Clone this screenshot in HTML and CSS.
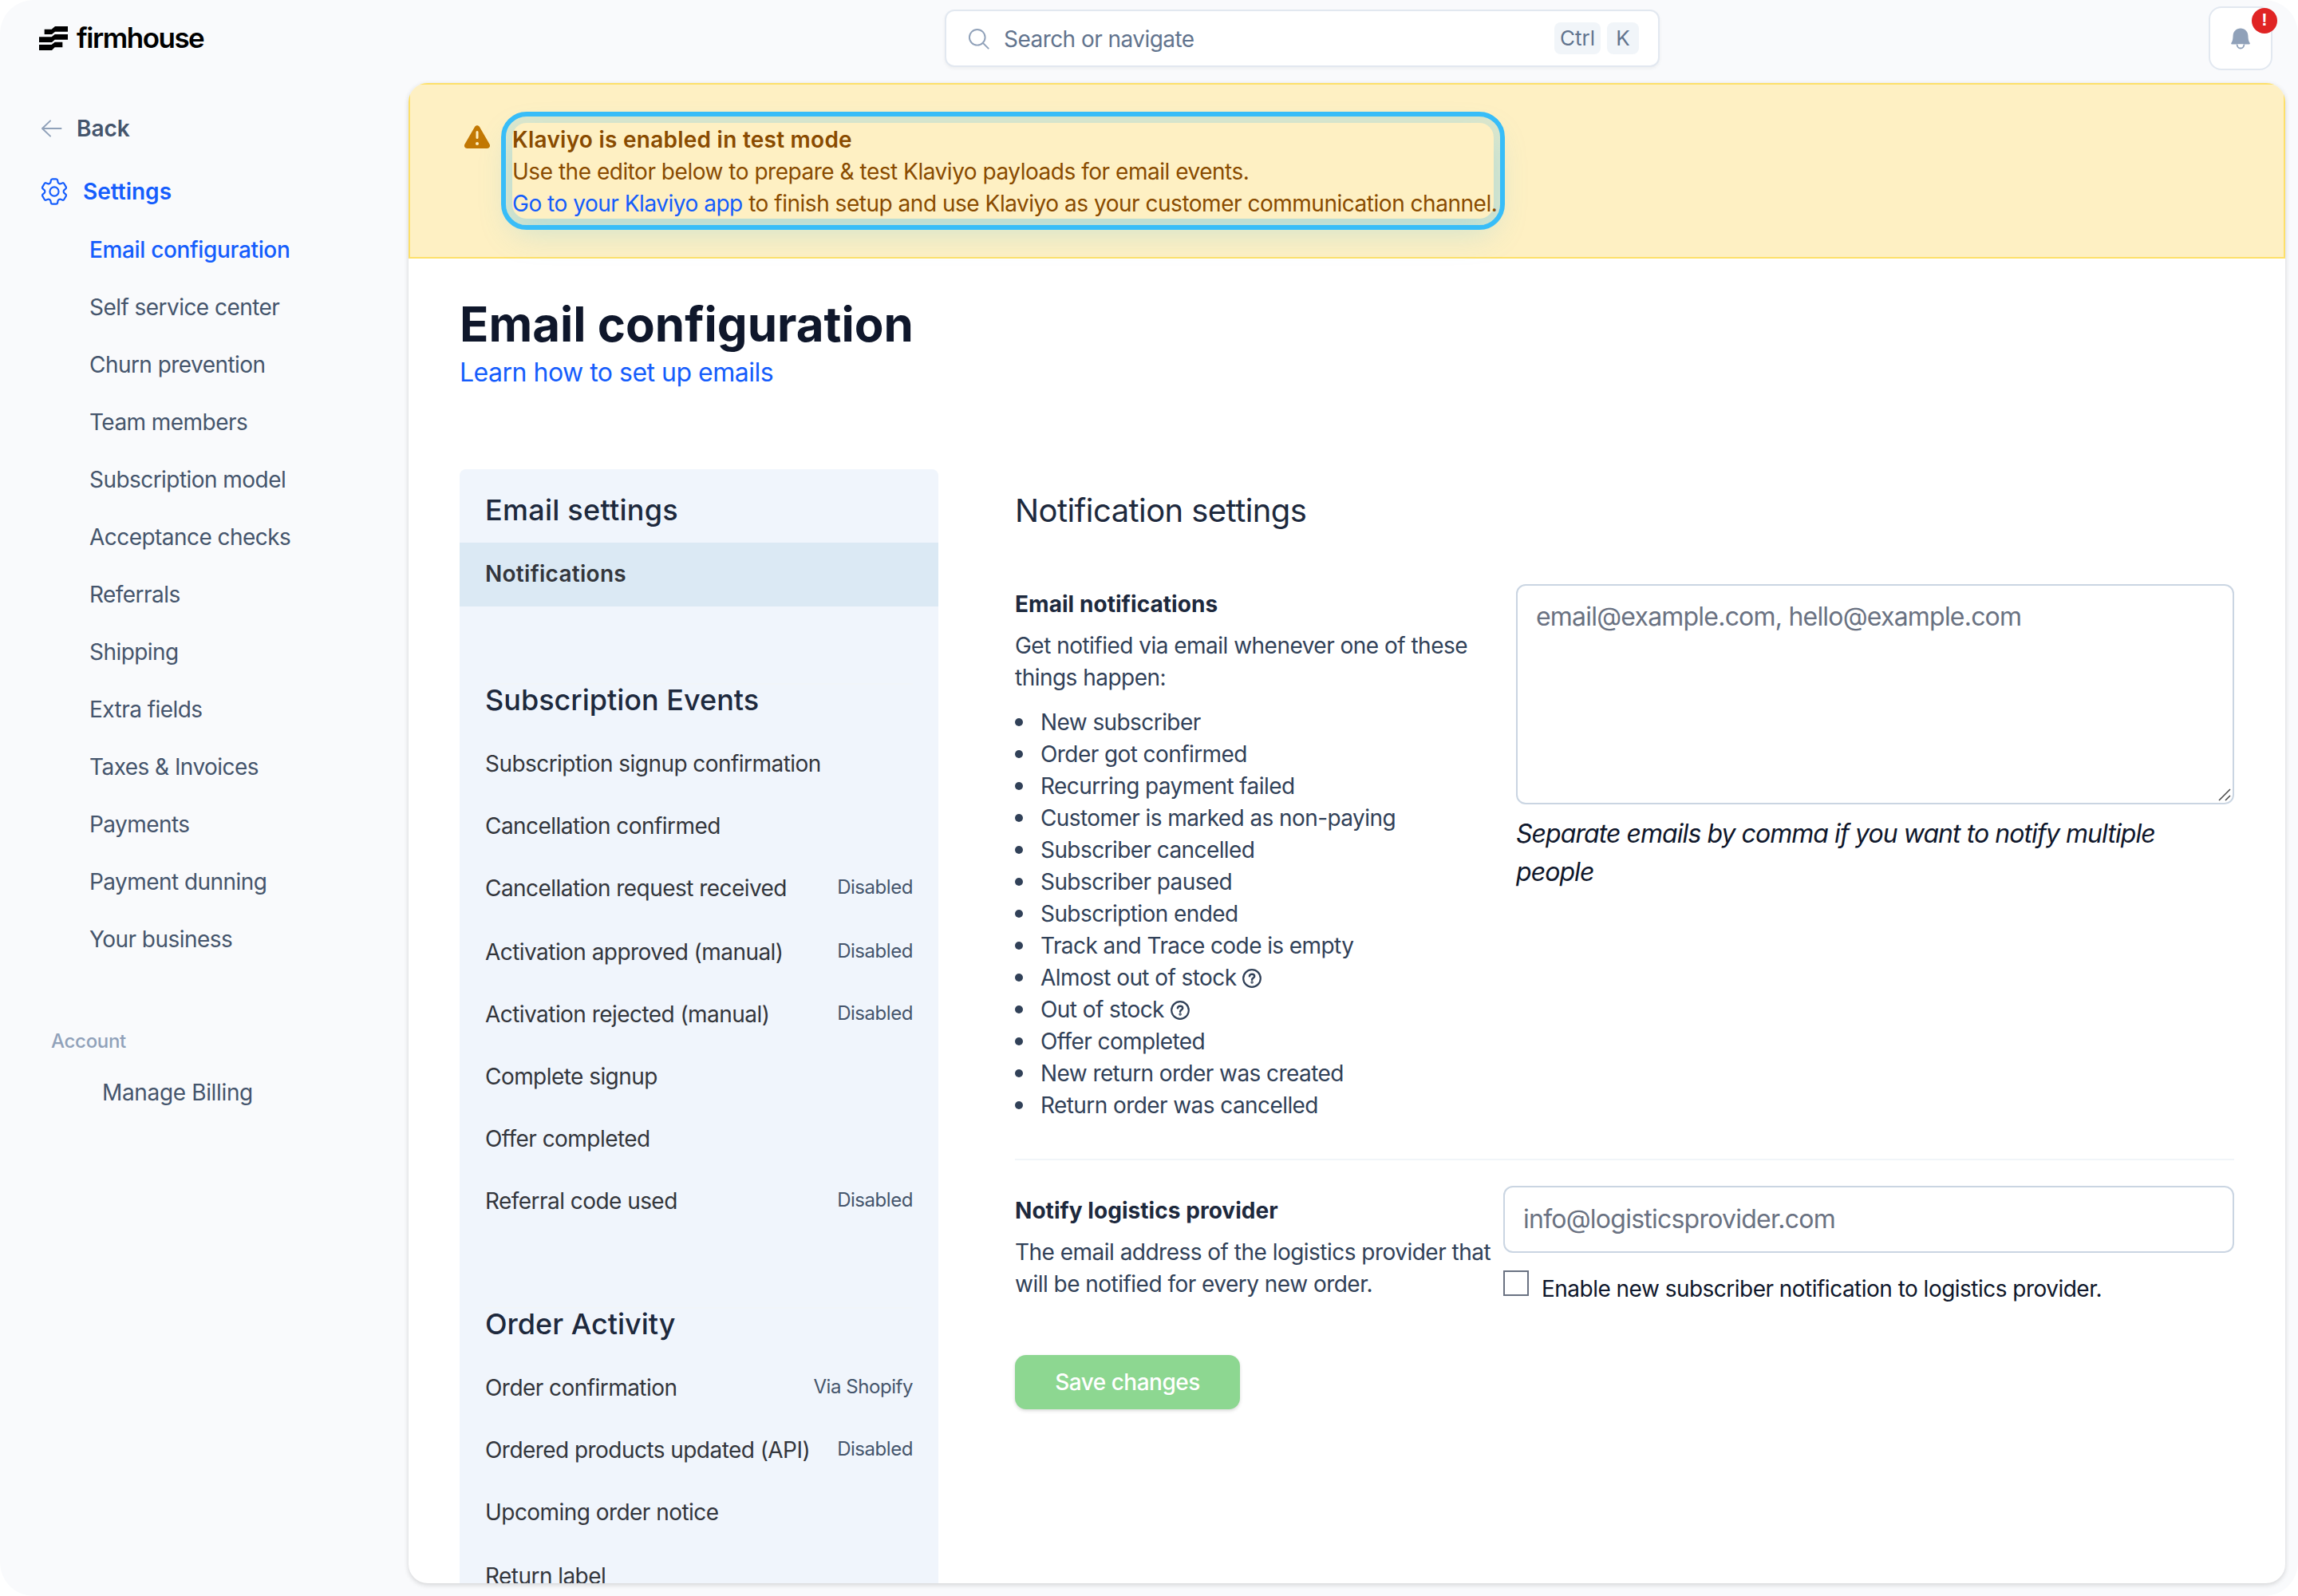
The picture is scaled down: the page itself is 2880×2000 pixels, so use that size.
FILE: index.html
```html
<!DOCTYPE html>
<html lang="en">
<head>
  <meta charset="UTF-8">
  <meta name="viewport" content="width=device-width, initial-scale=1">
  <title>Email configuration - Firmhouse</title>
  <link rel="stylesheet" href="styles.css">
</head>
<body>
  <div class="app">
    <header class="topbar">
      <a class="logo" href="#">
        <svg class="logo-mark" viewBox="148 99 108 90" fill="#000">
          <path d="M168 110h27l13-11h48v20h-48l-12 10h-28z"/>
          <path d="M148 139h47l12-10h49v20h-49l-11 10h-48z"/>
          <path d="M148 168h47l12-10h29v20h-29l-11 11h-48z"/>
        </svg>
        <span class="logo-text">firmhouse</span>
      </a>
      <div class="search">
        <svg class="search-icon" viewBox="0 0 28 28" fill="none" stroke="#90a1b9" stroke-width="2" stroke-linecap="round">
          <circle cx="12.2" cy="12.2" r="10.2"/>
          <path d="M19.6 19.6l7 7"/>
        </svg>
        <span class="search-text">Search or navigate</span>
        <kbd>Ctrl</kbd>
        <kbd class="key">K</kbd>
      </div>
      <button class="bell">
        <svg viewBox="0 0 24 27">
          <path d="M12 .5C6.500.5 2.800 4.500 2.600 9.500c-.2 4.500-.6 7-2.200 9.300-.5.800 0 1.700 1 1.700h21.200c1 0 1.500-.9 1-1.700-1.600-2.300-2-4.800-2.200-9.300C21.200 4.500 17.500.5 12 .5z" fill="#90a1b9"/>
          <path d="M7.500 20.500c.3 3.200 2 5 4.500 5s4.200-1.800 4.500-5" fill="#fff" stroke="#90a1b9" stroke-width="1.800"/>
        </svg>
        <span class="badge">!</span>
      </button>
    </header>

    <aside class="sidebar">
      <a class="back" href="#">
        <svg viewBox="0 0 28 24" fill="none" stroke="#90a1b9" stroke-width="2" stroke-linecap="round" stroke-linejoin="round">
          <path d="M12.500 2L2 12l10.500 10M2 12h24.500"/>
        </svg>
        Back
      </a>
      <a class="section" href="#">
        <svg viewBox="2.200 2.200 19.600 19.600" fill="none" stroke="currentColor" stroke-width="1.250" stroke-linecap="round" stroke-linejoin="round">
          <path d="M9.594 3.940c.09-.542.56-.94 1.110-.94h2.593c.55 0 1.020.398 1.110.94l.213 1.281c.063.374.313.686.645.87.074.04.147.083.22.127.325.196.72.257 1.075.124l1.217-.456a1.125 1.125 0 0 1 1.370.490l1.296 2.247a1.125 1.125 0 0 1-.26 1.431l-1.003.827c-.293.241-.438.613-.430.992a7.723 7.723 0 0 1 0 .255c-.008.378.137.750.430.991l1.004.827c.424.350.534.955.260 1.430l-1.298 2.247a1.125 1.125 0 0 1-1.369.491l-1.217-.456c-.355-.133-.750-.072-1.076.124a6.470 6.470 0 0 1-.220.128c-.331.183-.581.495-.644.869l-.213 1.281c-.090.543-.560.940-1.110.940h-2.594c-.550 0-1.019-.398-1.110-.940l-.213-1.281c-.062-.374-.312-.686-.644-.870a6.520 6.520 0 0 1-.220-.127c-.325-.196-.720-.257-1.076-.124l-1.217.456a1.125 1.125 0 0 1-1.369-.490l-1.297-2.247a1.125 1.125 0 0 1 .260-1.431l1.004-.827c.292-.240.437-.613.430-.991a6.932 6.932 0 0 1 0-.255c.007-.380-.138-.751-.430-.992l-1.004-.827a1.125 1.125 0 0 1-.260-1.430l1.297-2.247a1.125 1.125 0 0 1 1.370-.491l1.216.456c.356.133.751.072 1.076-.124.072-.044.146-.086.220-.128.332-.183.582-.495.644-.869z"/>
          <circle cx="12" cy="12" r="3.200"/>
        </svg>
        Settings
      </a>
      <nav>
        <a class="active" href="#">Email configuration</a>
        <a href="#">Self service center</a>
        <a href="#">Churn prevention</a>
        <a href="#">Team members</a>
        <a href="#">Subscription model</a>
        <a href="#">Acceptance checks</a>
        <a href="#">Referrals</a>
        <a href="#">Shipping</a>
        <a href="#">Extra fields</a>
        <a href="#">Taxes &amp; Invoices</a>
        <a href="#">Payments</a>
        <a href="#">Payment dunning</a>
        <a href="#">Your business</a>
      </nav>
      <div class="account">Account</div>
      <a class="billing" href="#">Manage Billing</a>
    </aside>

    <main>
      <div class="banner">
        <svg class="warning" viewBox="0 0 20 20" fill="#c27803">
          <path fill-rule="evenodd" clip-rule="evenodd" d="M8.485 2.495c.673-1.167 2.357-1.167 3.030 0l6.280 10.875c.673 1.167-.170 2.625-1.516 2.625H3.720c-1.347 0-2.189-1.458-1.515-2.625L8.485 2.495zM10 5a.75.75 0 0 1 .750.750v3.500a.75.75 0 0 1-1.500 0v-3.500A.75.75 0 0 1 10 5zm0 9a1 1 0 1 0 0-2 1 1 0 0 0 0 2z"/>
        </svg>
        <div class="banner-text">
          <strong>Klaviyo is enabled in test mode</strong>
          <p>Use the editor below to prepare &amp; test Klaviyo payloads for email events.</p>
          <p><a href="#">Go to your Klaviyo app</a> to finish setup and use Klaviyo as your customer communication channel.</p>
        </div>
      </div>

      <div class="content">
        <h1>Email configuration</h1>
        <a class="learn" href="#">Learn how to set up emails</a>

        <div class="columns">
          <div class="panel">
            <h3 class="first">Email settings</h3>
            <ul>
              <li class="current tall">Notifications</li>
            </ul>
            <h3>Subscription Events</h3>
            <ul>
              <li>Subscription signup confirmation</li>
              <li>Cancellation confirmed</li>
              <li class="tall">Cancellation request received <span>Disabled</span></li>
              <li>Activation approved (manual) <span>Disabled</span></li>
              <li>Activation rejected (manual) <span>Disabled</span></li>
              <li>Complete signup</li>
              <li>Offer completed</li>
              <li>Referral code used <span>Disabled</span></li>
            </ul>
            <h3>Order Activity</h3>
            <ul>
              <li>Order confirmation <span>Via Shopify</span></li>
              <li>Ordered products updated (API) <span>Disabled</span></li>
              <li class="tall">Upcoming order notice</li>
              <li>Return label</li>
            </ul>
          </div>

          <form class="settings">
            <h2>Notification settings</h2>
            <div class="row">
              <div class="info">
                <h4>Email notifications</h4>
                <p>Get notified via email whenever one of these<br>things happen:</p>
                <ul>
                  <li>New subscriber</li>
                  <li>Order got confirmed</li>
                  <li>Recurring payment failed</li>
                  <li>Customer is marked as non-paying</li>
                  <li>Subscriber cancelled</li>
                  <li>Subscriber paused</li>
                  <li>Subscription ended</li>
                  <li>Track and Trace code is empty</li>
                  <li>Almost out of stock
                    <svg class="help" viewBox="0 0 24 24" fill="none" stroke="currentColor" stroke-width="2.200" stroke-linecap="round">
                      <circle cx="12" cy="12" r="10.800"/>
                      <path d="M8.900 9.300c.3-1.600 1.500-2.500 3.200-2.500 1.800 0 3.100 1 3.100 2.600 0 2-3.100 2.300-3.100 4.300" stroke-width="2.500"/>
                      <circle cx="12.100" cy="17" r=".6"/>
                    </svg>
                  </li>
                  <li>Out of stock
                    <svg class="help" viewBox="0 0 24 24" fill="none" stroke="currentColor" stroke-width="2.200" stroke-linecap="round">
                      <circle cx="12" cy="12" r="10.800"/>
                      <path d="M8.900 9.300c.3-1.600 1.500-2.500 3.200-2.500 1.800 0 3.100 1 3.100 2.600 0 2-3.100 2.300-3.100 4.300" stroke-width="2.500"/>
                      <circle cx="12.100" cy="17" r=".6"/>
                    </svg>
                  </li>
                  <li>Offer completed</li>
                  <li>New return order was created</li>
                  <li>Return order was cancelled</li>
                </ul>
              </div>
              <div class="field">
                <div class="textarea">
                  email@example.com, hello@example.com
                  <svg class="grip" viewBox="0 0 16 16" stroke="#444" stroke-width="1.500">
                    <path d="M1 15L15 1M9 15l6-6"/>
                  </svg>
                </div>
                <p class="hint">Separate emails by comma if you want to notify multiple<br>people</p>
              </div>
            </div>

            <div class="row logistics">
              <div class="info">
                <h4>Notify logistics provider</h4>
                <p>The email address of the logistics provider that<br>will be notified for every new order.</p>
              </div>
              <div class="field">
                <input type="text" placeholder="info@logisticsprovider.com">
                <label class="check"><input type="checkbox"> <span>Enable new subscriber notification to logistics provider.</span></label>
              </div>
            </div>

            <button class="save" type="button">Save changes</button>
          </form>
        </div>
      </div>
    </main>
  </div>
</body>
</html>
```
FILE: styles.css
```css
* {
  box-sizing: border-box;
  margin: 0;
  padding: 0;
}

body {
  font-family: Inter, 'Liberation Sans', sans-serif;
  font-size: 28px;
  line-height: 40px;
  background: #fff;
  color: #0f172b;
}

a {
  color: #155dfc;
  text-decoration: none;
}

ul {
  list-style: none;
}

svg {
  display: block;
  flex-shrink: 0;
}

.app {
  display: grid;
  grid-template: 104px 1880px / 512px 2352px;
  width: 2880px;
  height: 2000px;
  overflow: hidden;
  background: #f9fafc;
  border-radius: 42px;
}

/* top bar */
.topbar {
  grid-column: 1 / 3;
  display: flex;
  justify-content: space-between;
  align-items: flex-start;
  padding: 8px 16px 0 49px;
}

.logo {
  display: flex;
  align-items: center;
  gap: 11px;
  width: 220px;
  height: 80px;
  color: #000;
}

.logo-mark {
  width: 36px;
  height: 30px;
}

.logo-text {
  padding-bottom: 2px;
  font-size: 35px;
  font-weight: 600;
  letter-spacing: -1.5px;
}

.search {
  display: flex;
  align-items: center;
  width: 896px;
  height: 72px;
  margin: 4px 0 0 227px;
  padding: 0 24px 0 27px;
  background: #fff;
  border: 2px solid #e2e8f0;
  border-radius: 12px;
  box-shadow: 0 2px 4px rgba(0, 0, 0, 0.05);
  color: #62748e;
}

.search-icon {
  width: 27px;
  height: 27px;
}

.search-text {
  flex: 1;
  margin-left: 18px;
  padding-top: 1px;
  letter-spacing: -0.55px;
}

kbd {
  width: 58px;
  height: 40px;
  margin-right: 8px;
  border-radius: 8px;
  background: #f1f5f9;
  font-family: inherit;
  font-size: 26px;
  text-align: center;
}

kbd.key {
  width: 40px;
  margin-right: 0;
}

.bell {
  position: relative;
  width: 80px;
  height: 80px;
  background: #fff;
  border: 2px solid #e2e8f0;
  border-radius: 16px;
}

.bell svg {
  width: 24px;
  height: 27px;
  margin: 0 auto;
}

.badge {
  position: absolute;
  top: 0;
  right: -8px;
  width: 32px;
  height: 32px;
  border-radius: 50%;
  background: #e02424;
  color: #fff;
  font-family: inherit;
  font-size: 22px;
  font-weight: 700;
  line-height: 30px;
}

/* sidebar */
.sidebar {
  padding: 28px 0 0 51px;
}

.sidebar a {
  display: flex;
  align-items: center;
  color: #45556c;
}

.sidebar .back {
  height: 57px;
  gap: 18px;
  font-weight: 600;
}

.back svg {
  width: 27px;
  height: 24px;
}

.sidebar .section {
  height: 56px;
  margin: 23px 0 8px;
  gap: 19px;
  color: #155dfc;
  font-weight: 600;
}

.section svg {
  width: 34px;
  height: 34px;
}

.sidebar nav a {
  height: 72px;
  padding: 1px 0 0 61px;
  letter-spacing: -0.55px;
}

.sidebar nav .active {
  color: #155dfc;
  font-weight: 500;
  letter-spacing: -0.35px;
}

.account {
  height: 48px;
  margin-top: 69px;
  padding-left: 13px;
  color: #90a1b9;
  font-size: 24px;
  font-weight: 500;
  letter-spacing: -0.3px;
  line-height: 48px;
}

.sidebar .billing {
  height: 56px;
  margin-top: 12px;
  padding-left: 77px;
  letter-spacing: -0.35px;
}

/* main card */
main {
  overflow: hidden;
  background: #fff;
  border-radius: 24px;
  box-shadow: 0 2px 6px rgba(0, 0, 0, 0.16);
}

.banner {
  display: flex;
  gap: 24px;
  height: 220px;
  padding: 48px 64px;
  background: #fef0c3;
  border: 2px solid #fde06a;
  color: #894b00;
}

.warning {
  width: 40px;
  height: 40px;
}

.banner-text {
  width: 1230px;
  height: 120px;
  padding-top: 1px;
  border-radius: 18px;
  outline: 6px solid #38bdf8;
  outline-offset: 8px;
  box-shadow: 0 0 0 8px rgba(56, 189, 248, 0.16), 0 16px 40px rgba(56, 189, 248, 0.25);
  letter-spacing: -0.48px;
  white-space: nowrap;
}

.banner-text strong {
  display: block;
  font-weight: 600;
  letter-spacing: 0.25px;
}

.content {
  padding: 46px 64px 0;
}

h1 {
  font-size: 60px;
  font-weight: 700;
  line-height: 72px;
}

.learn {
  display: block;
  padding-top: 1px;
  font-size: 32px;
  letter-spacing: -0.5px;
  line-height: 48px;
}

.columns {
  display: flex;
  gap: 96px;
  margin-top: 97px;
}

.panel {
  width: 600px;
  background: #f0f5fc;
  border-radius: 8px;
  color: #33363c;
}

.panel h3 {
  margin: 94px 32px 22px;
  border-top: 2px solid #f1f5f9;
  color: #1d293d;
  font-size: 36px;
  font-weight: 500;
  line-height: 38px;
}

.panel h3.first {
  margin: 0 32px;
  padding: 26px 0 16px;
  border: 0;
  letter-spacing: 0.25px;
  line-height: 50px;
}

.panel .first + ul {
  margin-bottom: 96px;
}

.panel li {
  display: flex;
  justify-content: space-between;
  height: 78px;
  padding: 19px 32px 0;
  letter-spacing: -0.55px;
}

.panel .tall {
  height: 80px;
}

.panel .current {
  background: #dbe9f4;
  font-weight: 600;
  letter-spacing: 0.28px;
}

.panel span {
  color: #45556c;
  font-size: 24px;
  letter-spacing: -0.45px;
  line-height: 38px;
}

/* notification settings */
.settings {
  width: 1528px;
  padding-top: 24px;
}

h2 {
  margin-bottom: 64px;
  color: #1d293d;
  font-size: 40px;
  font-weight: 400;
  letter-spacing: -0.57px;
  line-height: 56px;
}

.row {
  display: grid;
  grid-template-columns: 628px 900px;
  padding-bottom: 47px;
  border-bottom: 2px solid #f1f5f9;
}

.info {
  padding-top: 5px;
  color: #314158;
  letter-spacing: -0.52px;
  white-space: nowrap;
}

h4 {
  margin-bottom: 12px;
  color: #1d293d;
  font-size: 28px;
  font-weight: 700;
  letter-spacing: 0.05px;
}

.info ul {
  margin-top: 16px;
  letter-spacing: -0.58px;
}

.info li {
  display: flex;
  align-items: center;
}

.info li::before {
  content: '';
  width: 10px;
  height: 10px;
  margin-right: 22px;
  border-radius: 50%;
  background: #314158;
}

.help {
  width: 24px;
  height: 24px;
  margin: 2px 0 0 8px;
}

.textarea {
  position: relative;
  height: 276px;
  padding: 15px 23px;
  border: 2px solid #cad5e2;
  border-radius: 12px;
  color: #6a7282;
  font-size: 32px;
  letter-spacing: -0.79px;
  line-height: 48px;
}

.grip {
  position: absolute;
  right: 2px;
  bottom: 2px;
  width: 16px;
  height: 16px;
}

.hint {
  margin-top: 13px;
  font-size: 32px;
  font-style: italic;
  letter-spacing: -0.94px;
  line-height: 48px;
}

.logistics {
  grid-template-columns: 612px 916px;
  padding: 32px 0 0;
  border: 0;
}

.logistics .info {
  padding-top: 11px;
}

input[type="text"] {
  display: block;
  width: 100%;
  height: 84px;
  padding: 0 23px 2px;
  border: 2px solid #cad5e2;
  border-radius: 12px;
  font-family: inherit;
  font-size: 32px;
  letter-spacing: -0.76px;
}

input::placeholder {
  color: #6a7282;
}

.check {
  display: flex;
  gap: 16px;
  margin-top: 22px;
}

.check input {
  appearance: none;
  width: 32px;
  height: 32px;
  border: 2px solid #6a7282;
}

.check span {
  margin-top: 3px;
  letter-spacing: -0.52px;
}

.save {
  width: 282px;
  height: 68px;
  margin-top: 63px;
  border: 0;
  border-radius: 14px;
  background: #8dd791;
  box-shadow: 0 2px 4px rgba(0, 0, 0, 0.15);
  color: #fff;
  font-family: inherit;
  font-size: 28px;
  font-weight: 500;
  letter-spacing: -0.5px;
}
```
